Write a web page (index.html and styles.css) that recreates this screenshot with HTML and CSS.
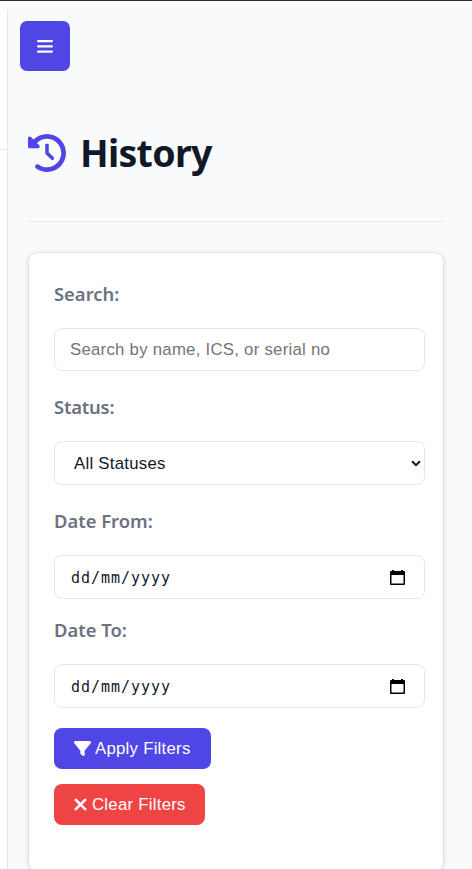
FILE: index.html
```html
<!DOCTYPE html>
<html lang="en">
<head>
<meta charset="utf-8">
<title>History</title>
<link rel="stylesheet" href="styles.css">
</head>
<body>
<aside class="sidebar"><div class="sidebar-head"></div></aside>
<main class="content">
  <button class="menu-toggle" type="button" aria-label="Menu">
    <svg class="icon-bars" viewBox="0 0 16 13"><path d="M1 0h14q1 0 1 1.100t-1 1.100H1Q0 2.200 0 1.100T1 0zM1 5.300h14q1 0 1 1.100t-1 1.100H1q-1 0-1-1.100t1-1.100zM1 10.600h14q1 0 1 1.100t-1 1.100H1q-1 0-1-1.100t1-1.100z"/></svg>
  </button>
  <header class="page-header">
    <svg class="icon-history" viewBox="0 0 512 512"><path d="M75 75L41 41C25.900 25.900 0 36.600 0 57.900V168c0 13.300 10.700 24 24 24H134.100c21.400 0 32.100-25.900 17-41l-30.800-30.800C155 85.500 203 64 256 64c106 0 192 86 192 192s-86 192-192 192c-40.800 0-78.600-12.700-109.700-34.400c-14.500-10.100-34.400-6.600-44.600 7.900s-6.600 34.400 7.900 44.600C151.200 495 201.700 512 256 512c141.400 0 256-114.600 256-256S397.400 0 256 0C185.300 0 121.300 28.700 75 75zm181 53c-13.300 0-24 10.700-24 24V256c0 6.400 2.500 12.500 7 17l72 72c9.400 9.400 24.600 9.400 33.900 0s9.400-24.600 0-33.900l-65-65V152c0-13.300-10.700-24-24-24z"/></svg>
    <h1>History</h1>
  </header>
  <form class="card">
    <label class="label label-search" for="search">Search:</label>
    <input class="control search" id="search" type="text" placeholder="Search by name, ICS, or serial no">
    <label class="label label-status">Status:</label>
    <div class="control select"><span>All Statuses</span>
      <svg class="chevron" viewBox="0 0 10 7"><path d="M1 1.200L5 5.200L9 1.200"/></svg>
    </div>
    <label class="label label-from">Date From:</label>
    <div class="control date"><span>dd/mm/yyyy</span>
      <svg class="calendar" viewBox="0 0 15 16"><path fill-rule="evenodd" d="M2 0h2v1h7V0h2v1h1q1 0 1 1v12q0 1-1 1H1q-1 0-1-1V2q0-1 1-1h1zM1.500 5v8.500h12V5z"/></svg>
    </div>
    <label class="label label-to">Date To:</label>
    <div class="control date"><span>dd/mm/yyyy</span>
      <svg class="calendar" viewBox="0 0 15 16"><path fill-rule="evenodd" d="M2 0h2v1h7V0h2v1h1q1 0 1 1v12q0 1-1 1H1q-1 0-1-1V2q0-1 1-1h1zM1.500 5v8.500h12V5z"/></svg>
    </div>
    <button class="btn apply" type="button">
      <svg class="icon-filter" viewBox="0 0 512 512"><path d="M3.900 54.900C10.500 40.900 24.500 32 40 32H472c15.500 0 29.500 8.900 36.100 22.900s4.600 30.500-5.200 42.500L320 320.900V448c0 12.100-6.800 23.200-17.700 28.600s-23.800 4.300-33.500-3l-64-48c-8.100-6-12.800-15.500-12.800-25.600V320.900L9 97.300C-.7 85.400-2.800 68.800 3.900 54.900z"/></svg><span>Apply Filters</span>
    </button>
    <button class="btn clear" type="button">
      <svg class="icon-x" viewBox="0 0 12 12"><path d="M1.700 1.700L10.300 10.300M10.300 1.700L1.700 10.300"/></svg><span>Clear Filters</span>
    </button>
  </form>
</main>
</body>
</html>
```
FILE: styles.css
```css
* { box-sizing: border-box; }
body {
  margin: 0;
  height: 869px;
  overflow: hidden;
  display: flex;
  background: #f9fafb;
  border-top: 1px solid #2e2e33;
  color: #111827;
  font-family: "Noto Sans", "Open Sans", sans-serif;
}
svg { display: block; flex: none; fill: currentColor; }
.sidebar {
  flex: none;
  width: 8px;
  margin-top: 8px;
  background: #fff;
  border-right: 1px solid #e5e7eb;
}
.sidebar-head { height: 141px; border-bottom: 1px solid #e5e7eb; }
.content { flex: none; width: 436px; padding: 20px 0 0 20px; }
.menu-toggle {
  display: flex;
  align-items: center;
  justify-content: center;
  width: 50px;
  height: 50px;
  margin-left: -8px;
  padding: 0;
  border: 0;
  border-radius: 7px;
  background: #4f46e5;
  color: #fff;
}
.icon-bars { width: 16px; height: 13px; }
.page-header {
  display: flex;
  align-items: center;
  height: 151px;
  padding-top: 14px;
  border-bottom: 1px solid #e5e7eb;
  color: #4f46e5;
}
.icon-history { width: 38px; height: 38px; }
h1 {
  margin: 0 0 0 14px;
  color: #111827;
  font-size: 37.5px;
  line-height: 52px;
  font-weight: 700;
  letter-spacing: -0.7px;
}
.card {
  display: flex;
  flex-direction: column;
  align-items: flex-start;
  height: 620px;
  margin-top: 30px;
  padding: 25px 18px 0 25px;
  background: #fff;
  border: 1px solid #e5e7eb;
  border-radius: 10px;
  box-shadow: 0 1px 4px rgba(0, 0, 0, 0.13);
}
.label {
  height: 32px;
  color: #6b7280;
  font-size: 18.4px;
  line-height: 32px;
  font-weight: 600;
}
.label-search { margin-bottom: 18px; }
.label-status { margin: 20px 0 18px; letter-spacing: -0.2px; }
.label-from { margin: 20px 0 18px; }
.label-to { margin: 15px 0 18px; }
.control {
  display: flex;
  align-items: center;
  width: 371px;
  height: 44px;
  border: 1px solid #e5e7eb;
  border-radius: 8px;
  background: #fff;
  color: #111827;
  font: 16.8px "Liberation Sans", sans-serif;
  letter-spacing: 0.25px;
}
.search { height: 43px; padding: 0 15px; }
.search::placeholder { color: #757575; opacity: 1; }
.select { justify-content: space-between; padding: 1px 3px 0 19px; }
.chevron { width: 10px; height: 7px; fill: none; stroke: #111827; stroke-width: 2; }
.date { justify-content: space-between; padding: 1px 19px 0 16px; }
.date span { padding-top: 1px; font: 15px "DejaVu Sans Mono", monospace; letter-spacing: 0.97px; }
.calendar { width: 15px; height: 16px; color: #000; }
.btn {
  display: flex;
  align-items: center;
  height: 41px;
  padding: 0 0 0 20px;
  border: 0;
  border-radius: 8px;
  color: #fff;
  font: 16.8px "Liberation Sans", sans-serif;
  letter-spacing: 0.25px;
}
.apply { width: 157px; margin-top: 20px; background: #4f46e5; }
.clear { width: 151px; margin-top: 15px; background: #ef4444; }
.icon-filter { width: 17px; height: 17px; margin-right: 4px; }
.icon-x { width: 13px; height: 13px; margin-right: 5px; stroke: #fff; stroke-width: 2.500; stroke-linecap: round; }
```
